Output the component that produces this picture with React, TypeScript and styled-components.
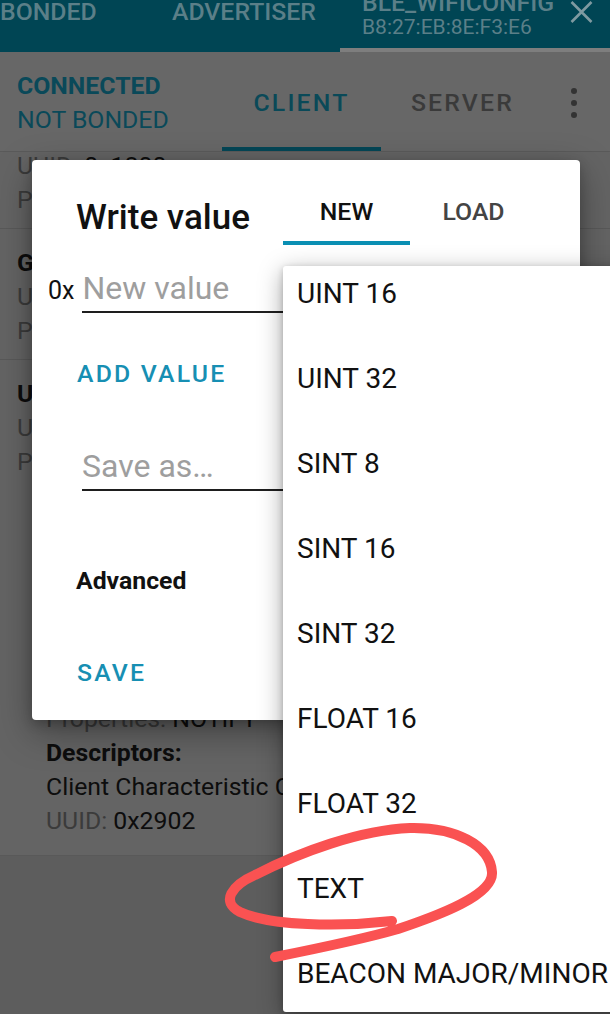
import React from "react";
import styled, { createGlobalStyle } from "styled-components";

const GlobalStyle = createGlobalStyle`
  html, body { margin: 0; padding: 0; background: #5d5d5d; overflow: hidden; }
  body { font-family: Roboto, "Noto Sans", "Liberation Sans", sans-serif; }
  * { box-sizing: border-box; }
`;

const Screen = styled.div`
  position: relative;
  width: 610px;
  height: 1014px;
  overflow: hidden;
  display: flex;
  flex-direction: column;
  background: #5d5d5d;
`;

/* ---------- top tab strip (dimmed) ---------- */
const TabStrip = styled.div`
  flex: none;
  display: flex;
  height: 52px;
  background: #004554;
  overflow: hidden;
`;

const StripTab = styled.div<{ $w: number; $pl: number; $active?: boolean }>`
  flex: none;
  width: ${(p) => p.$w}px;
  padding-left: ${(p) => p.$pl}px;
  display: flex;
  align-items: flex-start;
  border-bottom: 4px solid ${(p) => (p.$active ? "#7e7e7e" : "transparent")};
  color: #5b7f88;
  font-size: 24.8px;
  font-weight: 500;
`;

const StripLabel = styled.div`
  line-height: 29px;
  margin-top: -3px;
  white-space: nowrap;
`;

const DeviceLabels = styled.div`
  display: flex;
  flex-direction: column;
  margin-top: -12px;
`;

const DeviceName = styled.div`
  font-size: 24.8px;
  font-weight: 500;
  line-height: 29px;
  white-space: nowrap;
`;

const DeviceAddress = styled.div`
  font-size: 21px;
  font-weight: 400;
  line-height: 21px;
  white-space: nowrap;
`;

const CloseIcon = styled.svg`
  flex: none;
  margin-left: auto;
  margin-right: 17px;
  margin-top: 1px;
`;

/* ---------- connection bar ---------- */
const ConnectionBar = styled.div`
  flex: none;
  display: flex;
  height: 100px;
  background: #676767;
  border-bottom: 1px solid #5a5a5a;
`;

const Status = styled.div`
  width: 222px;
  padding: 3px 0 0 17px;
  display: flex;
  flex-direction: column;
  justify-content: center;
  color: #0a4959;
  font-size: 24.8px;
  line-height: 34px;
`;

const StatusLine = styled.div<{ $bold?: boolean }>`
  font-weight: ${(p) => (p.$bold ? 700 : 400)};
  white-space: nowrap;
`;

const ModeTab = styled.div<{ $w: number; $active?: boolean }>`
  flex: none;
  width: ${(p) => p.$w}px;
  padding-top: 6px;
  display: flex;
  align-items: center;
  justify-content: center;
  border-bottom: 4px solid ${(p) => (p.$active ? "#044656" : "transparent")};
  color: ${(p) => (p.$active ? "#0a4958" : "#3a3a3a")};
  font-size: 24.8px;
  font-weight: 500;
  letter-spacing: 2.2px;
`;

const Kebab = styled.div`
  margin-left: auto;
  padding: 3px 33px 0 0;
  display: flex;
  align-items: center;
`;

/* ---------- service list (dimmed) ---------- */
const ServiceList = styled.div`
  flex: 1;
  overflow: hidden;
  background: #5d5d5d;
`;

const ListScroll = styled.div`
  margin-top: -54px;
`;

const ServiceRow = styled.div<{ $pb: number }>`
  background: #646464;
  padding: 17px 0 ${(p) => p.$pb}px 17px;
  border-bottom: 1px solid #595959;
  font-size: 24.8px;
  line-height: 34px;
  color: #0d0d0d;
`;

const Line = styled.div<{ $bold?: boolean }>`
  font-weight: ${(p) => (p.$bold ? 700 : 400)};
  white-space: nowrap;
`;

const Label = styled.span`
  color: #3b3b3b;
`;

const Characteristic = styled.div<{ $mt: number }>`
  margin-top: ${(p) => p.$mt}px;
  padding-left: 29px;
`;

/* ---------- dialog ---------- */
const Dialog = styled.div`
  position: absolute;
  left: 32px;
  top: 160px;
  width: 548px;
  height: 560px;
  background: #ffffff;
  border-radius: 4px;
  box-shadow: 0 12px 36px rgba(0, 0, 0, 0.35), 0 4px 12px rgba(0, 0, 0, 0.2);
  display: flex;
  flex-direction: column;
`;

const DialogHeader = styled.div`
  flex: none;
  display: flex;
  height: 85px;
`;

const DialogTitle = styled.h2`
  margin: 0;
  flex: none;
  width: 251px;
  padding: 37px 0 0 44px;
  font-size: 35px;
  font-weight: 500;
  line-height: 41px;
  color: #111111;
  white-space: nowrap;
`;

const DialogTab = styled.div<{ $active?: boolean }>`
  flex: none;
  width: 127px;
  padding-top: 37px;
  text-align: center;
  font-size: 24.8px;
  font-weight: 500;
  line-height: 29px;
  color: ${(p) => (p.$active ? "#111111" : "#444444")};
  border-bottom: 4px solid ${(p) => (p.$active ? "#0a8fb3" : "transparent")};
`;

const InputRow = styled.div<{ $mt: number; $pl: number }>`
  display: flex;
  align-items: baseline;
  margin-top: ${(p) => p.$mt}px;
  padding-left: ${(p) => p.$pl}px;
`;

const Prefix = styled.span`
  font-size: 25px;
  color: #111111;
  margin-right: 8px;
`;

const TextInput = styled.input`
  width: 466px;
  height: 49px;
  padding: 0;
  border: none;
  border-bottom: 2px solid #1e1e1e;
  border-radius: 0;
  outline: none;
  background: transparent;
  font-family: Roboto, "Noto Sans", sans-serif;
  font-size: 32px;
  color: #111111;
  &::placeholder {
    color: #9e9e9e;
  }
`;

const TextButton = styled.div<{ $mt: number }>`
  align-self: flex-start;
  margin-top: ${(p) => p.$mt}px;
  padding-left: 45px;
  font-size: 24.8px;
  font-weight: 500;
  letter-spacing: 2.2px;
  line-height: 29px;
  color: #178fb3;
`;

const SectionLabel = styled.div`
  margin-top: 75px;
  padding-left: 44px;
  font-size: 24.8px;
  font-weight: 700;
  line-height: 29px;
  color: #111111;
`;

/* ---------- dropdown ---------- */
const Dropdown = styled.div`
  position: absolute;
  left: 283px;
  top: 266px;
  width: 360px;
  height: 746px;
  background: #ffffff;
  border-radius: 3px;
  box-shadow: 0 6px 24px rgba(0, 0, 0, 0.35), 0 2px 6px rgba(0, 0, 0, 0.2);
  overflow: hidden;
`;

const OptionList = styled.ul`
  list-style: none;
  margin: -100px 0 0;
  padding: 0;
`;

const OptionItem = styled.li`
  height: 85px;
  display: flex;
  align-items: center;
  padding-left: 14px;
  font-size: 28px;
  color: #111111;
  white-space: nowrap;
`;

const Scribble = styled.svg`
  position: absolute;
  left: 0;
  top: 0;
  pointer-events: none;
`;

const formats = [
  "UINT 8",
  "UINT 16",
  "UINT 32",
  "SINT 8",
  "SINT 16",
  "SINT 32",
  "FLOAT 16",
  "FLOAT 32",
  "TEXT",
  "BEACON MAJOR/MINOR",
];

export default function App() {
  return (
    <>
      <GlobalStyle />
      <Screen>
        <TabStrip>
          <StripTab $w={172} $pl={0}>
            <StripLabel>BONDED</StripLabel>
          </StripTab>
          <StripTab $w={168} $pl={0}>
            <StripLabel>ADVERTISER</StripLabel>
          </StripTab>
          <StripTab $w={270} $pl={22} $active>
            <DeviceLabels>
              <DeviceName>BLE_WIFICONFIG</DeviceName>
              <DeviceAddress>B8:27:EB:8E:F3:E6</DeviceAddress>
            </DeviceLabels>
            <CloseIcon width="23" height="22" viewBox="0 0 23 22">
              <path d="M1.5 1 L21.5 21 M21.5 1 L1.5 21" stroke="#7f9aa1" strokeWidth="2.6" fill="none" />
            </CloseIcon>
          </StripTab>
        </TabStrip>

        <ConnectionBar>
          <Status>
            <StatusLine $bold>CONNECTED</StatusLine>
            <StatusLine>NOT BONDED</StatusLine>
          </Status>
          <ModeTab $w={159} $active>CLIENT</ModeTab>
          <ModeTab $w={163}>SERVER</ModeTab>
          <Kebab>
            <svg width="6" height="30" viewBox="0 0 6 30">
              <circle cx="3" cy="3" r="3" fill="#333" />
              <circle cx="3" cy="15" r="3" fill="#333" />
              <circle cx="3" cy="27" r="3" fill="#333" />
            </svg>
          </Kebab>
        </ConnectionBar>

        <ServiceList>
          <ListScroll>
            <ServiceRow $pb={11}>
              <Line $bold>Generic Access</Line>
              <Line><Label>UUID: </Label>0x1800</Line>
              <Line><Label>PRIMARY SERVICE</Label></Line>
            </ServiceRow>
            <ServiceRow $pb={11}>
              <Line $bold>Generic Attribute</Line>
              <Line><Label>UUID: </Label>0x1801</Line>
              <Line><Label>PRIMARY SERVICE</Label></Line>
            </ServiceRow>
            <ServiceRow $pb={17}>
              <Line $bold>Unknown Service</Line>
              <Line><Label>UUID: </Label>6e400001-b5a3-f393-e0a9</Line>
              <Line><Label>PRIMARY SERVICE</Label></Line>
              <Characteristic $mt={10}>
                <Line $bold>Unknown Characteristic</Line>
                <Line><Label>UUID: </Label>6e400002-b5a3-f393</Line>
                <Line><Label>Properties: </Label>READ, WRITE</Line>
                <Line><Label>Value: </Label>(0x) 00</Line>
              </Characteristic>
              <Characteristic $mt={9}>
                <Line $bold>Unknown Characteristic</Line>
                <Line><Label>UUID: </Label>6e400003-b5a3-f393</Line>
                <Line><Label>Properties: </Label>NOTIFY</Line>
                <Line $bold>Descriptors:</Line>
                <Line>Client Characteristic Configuration</Line>
                <Line><Label>UUID: </Label>0x2902</Line>
              </Characteristic>
            </ServiceRow>
          </ListScroll>
        </ServiceList>

        <Dialog>
          <DialogHeader>
            <DialogTitle>Write value</DialogTitle>
            <DialogTab $active>NEW</DialogTab>
            <DialogTab>LOAD</DialogTab>
          </DialogHeader>
          <InputRow $mt={19} $pl={16}>
            <Prefix>0x</Prefix>
            <TextInput placeholder="New value" readOnly />
          </InputRow>
          <TextButton $mt={46}>ADD VALUE</TextButton>
          <InputRow $mt={54} $pl={50}>
            <TextInput placeholder="Save as…" readOnly />
          </InputRow>
          <SectionLabel>Advanced</SectionLabel>
          <TextButton $mt={63}>SAVE</TextButton>
        </Dialog>

        <Dropdown>
          <OptionList>
            {formats.map((f) => (
              <OptionItem key={f}>{f}</OptionItem>
            ))}
          </OptionList>
        </Dropdown>

        <Scribble width="610" height="1014" viewBox="0 0 610 1014">
          <path
            d="M392 921 C340 927 270 926 240 912 C220 902 232 885 255 875 C300 852 360 830 410 828 C455 827 490 845 492 872 C494 895 440 915 398 929 C360 940 310 950 275 957"
            fill="none"
            stroke="#fa5252"
            strokeWidth="10"
            strokeLinecap="round"
            strokeLinejoin="round"
          />
        </Scribble>
      </Screen>
    </>
  );
}
